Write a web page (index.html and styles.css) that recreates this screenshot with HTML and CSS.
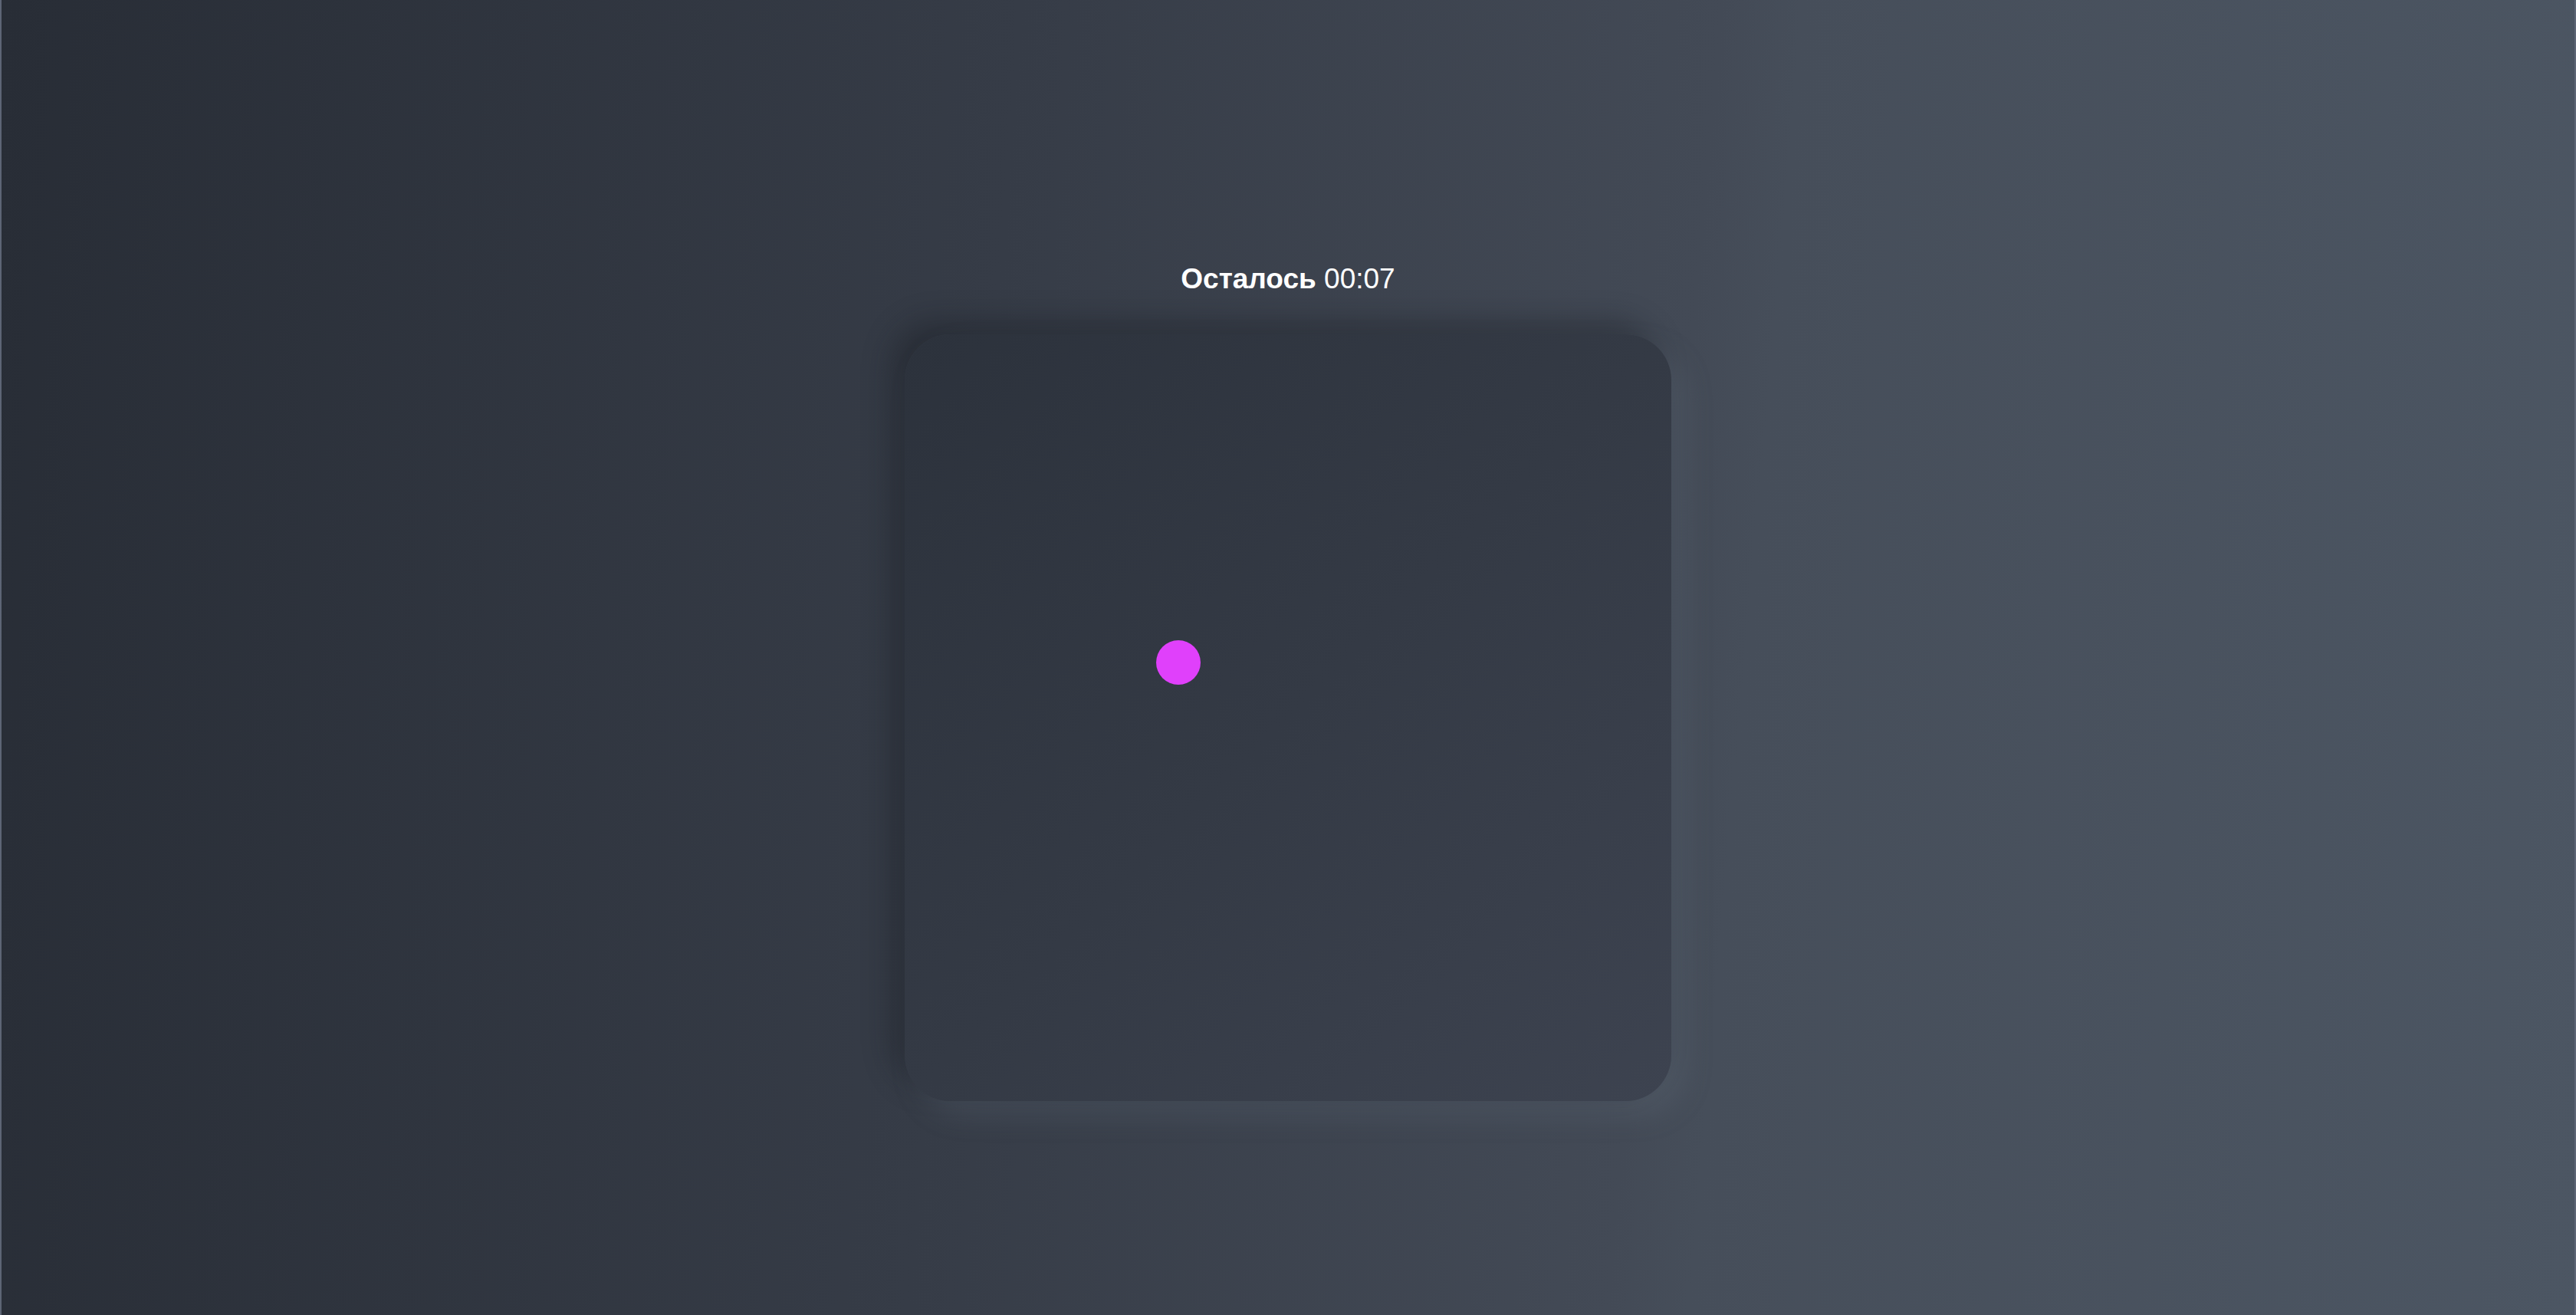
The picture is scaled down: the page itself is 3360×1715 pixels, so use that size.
FILE: index.html
```html
<!DOCTYPE html>
<html lang="ru">
<head>
<meta charset="utf-8">
<title>Игра</title>
<link rel="stylesheet" href="styles.css">
</head>
<body>
<main class="page">
  <div class="timer"><span class="timer-label">Осталось</span> <span class="timer-value">00:07</span></div>
  <div class="field">
    <div class="dot" style="left: 328px; top: 399px;"></div>
  </div>
</main>
</body>
</html>
```
FILE: styles.css
```css
html, body {
  margin: 0;
  padding: 0;
  height: 100%;
}
body {
  font-family: "Liberation Sans", Arial, sans-serif;
  color: #ffffff;
  background: linear-gradient(95deg, #282d36 0%, #363c47 38%, #434a56 64%, #464e5a 67%, #4c5663 100%);
  border-left: 2px solid #5d6575;
  border-right: 2px solid #5d6575;
  box-sizing: border-box;
  overflow: hidden;
}
.page {
  display: flex;
  flex-direction: column;
  align-items: center;
  padding-top: 340px;
  gap: 48px;
}
.timer {
  font-size: 37px;
  line-height: 48px;
  white-space: nowrap;
}
.timer-label {
  font-weight: 700;
}
.timer-value {
  font-weight: 400;
}
.field {
  position: relative;
  width: 1000px;
  height: 1000px;
  border-radius: 60px;
  background: linear-gradient(135deg, #2c323c 0%, #343a45 50%, #3d4350 100%);
  box-shadow: -18px -18px 36px rgba(20, 24, 30, 0.35), 18px 18px 36px rgba(110, 122, 138, 0.22);
}
.dot {
  position: absolute;
  width: 58px;
  height: 58px;
  border-radius: 50%;
  background: #e040fb;
}
```
